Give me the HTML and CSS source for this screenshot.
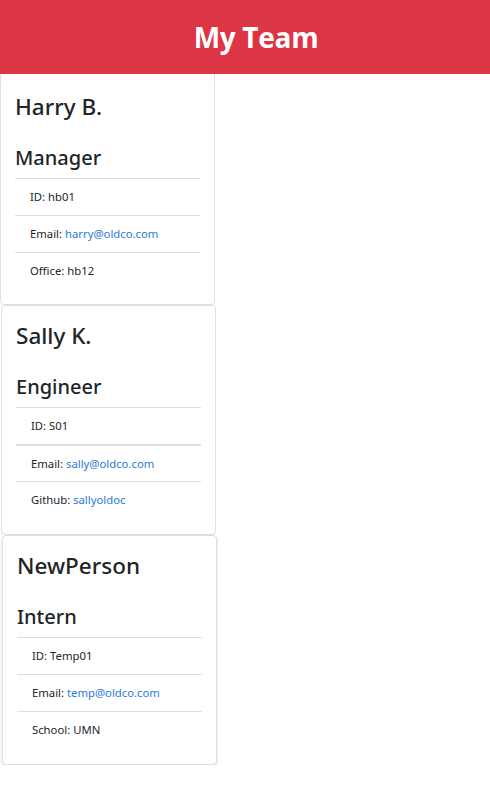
FILE: index.html
```html
<!DOCTYPE html>
<html>
<head>
<meta charset="utf-8">
<link rel="stylesheet" href="styles.css">
</head>
<body>
<header class="banner"><h1 class="banner-title">My Team</h1></header>
<main class="team">
  <section class="card card-1">
    <div class="card-body">
      <h2 class="name">Harry B.</h2>
      <h3 class="role">Manager</h3>
      <ul class="list">
        <li class="item">ID: hb01</li>
        <li class="item">Email: <a class="link" href="#">harry@oldco.com</a></li>
        <li class="item">Office: hb12</li>
      </ul>
    </div>
  </section>
  <section class="card card-2">
    <div class="card-body">
      <h2 class="name">Sally K.</h2>
      <h3 class="role">Engineer</h3>
      <ul class="list">
        <li class="item item-thick">ID: S01</li>
        <li class="item">Email: <a class="link" href="#">sally@oldco.com</a></li>
        <li class="item">Github: <a class="link" href="#">sallyoldoc</a></li>
      </ul>
    </div>
  </section>
  <section class="card card-3">
    <div class="card-body">
      <h2 class="name">NewPerson</h2>
      <h3 class="role">Intern</h3>
      <ul class="list">
        <li class="item">ID: Temp01</li>
        <li class="item">Email: <a class="link" href="#">temp@oldco.com</a></li>
        <li class="item">School: UMN</li>
      </ul>
    </div>
  </section>
</main>
</body>
</html>
```
FILE: styles.css
```css
* { box-sizing: border-box; }
html, body { margin: 0; padding: 0; background: #fff; }
body {
  font-family: "Noto Sans", "Open Sans", sans-serif;
  color: #212529;
}
.banner {
  background: #dc3545;
  height: 74px;
  display: flex;
  align-items: center;
  justify-content: center;
  padding-left: 22px;
  position: relative;
  z-index: 2;
}
.banner-title {
  margin: 0;
  color: #fff;
  font-family: "Open Sans", sans-serif;
  font-size: 28px;
  font-weight: 700;
  letter-spacing: -0.3px;
}
.team {
  display: flex;
  flex-direction: column;
  align-items: flex-start;
}
.card {
  width: 215px;
  height: 230px;
  border: 1px solid #dfdfdf;
  border-radius: 4px;
  background: #fff;
}
.card-1 { margin-top: -4px; height: 235px; border-radius: 0 0 4px 4px; }
.card-2 { margin-left: 1px; }
.card-3 { margin-left: 2px; box-shadow: 0 2px 3px rgba(0,0,0,0.15); }
.card-body { padding: 16px 14px 15px 14px; }
.card-1 .card-body { padding-top: 22px; }
.name {
  margin: 0 0 25px;
  font-size: 22.5px;
  font-weight: 500;
  line-height: 28px;
  letter-spacing: 0;
}
.role {
  margin: 0 0 8px;
  font-size: 20px;
  font-weight: 500;
  line-height: 24px;
  letter-spacing: 0;
}
.list {
  list-style: none;
  margin: 0;
  padding: 0;
}
.item {
  font-size: 11.3px;
  line-height: 16px;
  padding: 10px 15px;
  border-top: 1px solid #dfdfdf;
  height: 37px;
}
.item-thick + .item { border-top-width: 2px; }
.link { color: #2a7ad6; text-decoration: none; }
```
